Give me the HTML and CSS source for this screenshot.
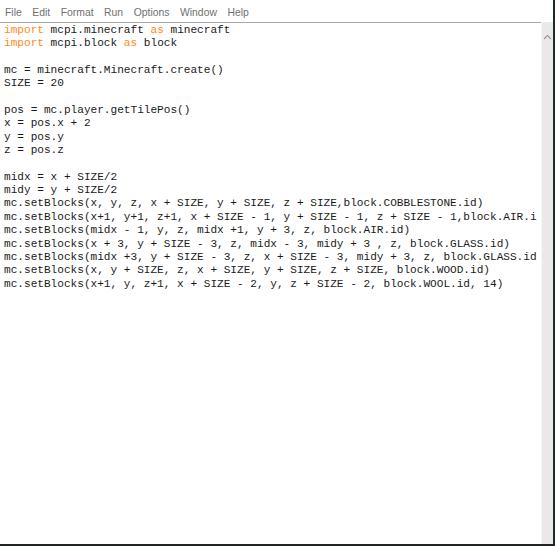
FILE: index.html
```html
<!DOCTYPE html>
<html lang="en">

<head>
    <meta charset="UTF-8">
    <meta name="viewport" content="width=device-width, initial-scale=1.0">
    <title>IDLE editor</title>
    <link rel="stylesheet" href="styles.css">
</head>

<body>
    <div class="window">
        <div class="menu-bar">
            <span class="menu-item">File</span>
            <span class="menu-item">Edit</span>
            <span class="menu-item">Format</span>
            <span class="menu-item">Run</span>
            <span class="menu-item">Options</span>
            <span class="menu-item">Window</span>
            <span class="menu-item">Help</span>
        </div>
        <div class="main">
            <div class="editor">
                <div class="line"><span class="kw">import</span> mcpi.minecraft <span class="kw">as</span> minecraft</div>
                <div class="line"><span class="kw">import</span> mcpi.block <span class="kw">as</span> block</div>
                <div class="line"></div>
                <div class="line">mc = minecraft.Minecraft.create()</div>
                <div class="line">SIZE = 20</div>
                <div class="line"></div>
                <div class="line">pos = mc.player.getTilePos()</div>
                <div class="line">x = pos.x + 2</div>
                <div class="line">y = pos.y</div>
                <div class="line">z = pos.z</div>
                <div class="line"></div>
                <div class="line">midx = x + SIZE/2</div>
                <div class="line">midy = y + SIZE/2</div>
                <div class="line">mc.setBlocks(x, y, z, x + SIZE, y + SIZE, z + SIZE,block.COBBLESTONE.id)</div>
                <div class="line">mc.setBlocks(x+1, y+1, z+1, x + SIZE - 1, y + SIZE - 1, z + SIZE - 1,block.AIR.i</div>
                <div class="line">mc.setBlocks(midx - 1, y, z, midx +1, y + 3, z, block.AIR.id)</div>
                <div class="line">mc.setBlocks(x + 3, y + SIZE - 3, z, midx - 3, midy + 3 , z, block.GLASS.id)</div>
                <div class="line">mc.setBlocks(midx +3, y + SIZE - 3, z, x + SIZE - 3, midy + 3, z, block.GLASS.id</div>
                <div class="line">mc.setBlocks(x, y + SIZE, z, x + SIZE, y + SIZE, z + SIZE, block.WOOD.id)</div>
                <div class="line">mc.setBlocks(x+1, y, z+1, x + SIZE - 2, y, z + SIZE - 2, block.WOOL.id, 14)</div>
            </div>
            <div class="scrollbar">
                <svg class="arrow" width="9" height="6" viewBox="0 0 9 6">
                    <path d="M1 5 L4.5 1.5 L8 5" fill="none" stroke="#9a9a9a" stroke-width="1.2" />
                </svg>
            </div>
        </div>
    </div>
</body>

</html>
```

FILE: styles.css
```css
* {
    box-sizing: border-box;
}

body {
    margin: 0;
    background-color: #ffffff;
}

.window {
    width: 555px;
    height: 546px;
    display: flex;
    flex-direction: column;
    border-right: 2px solid #1e2626;
    border-bottom: 2px solid #1e2626;
    background-color: #ffffff;
    overflow: hidden;
}

.menu-bar {
    height: 22px;
    display: flex;
    align-items: center;
    padding: 2px 0 0 5px;
    gap: 10.5px;
    font-family: "Liberation Sans", sans-serif;
    font-size: 10.4px;
    color: #707070;
}

.main {
    flex: 1;
    display: flex;
    min-height: 0;
}

.editor {
    flex: 1;
    min-width: 0;
    padding: 1px 0 0 4px;
    border-top: 1px solid #a8a8a8;
    font-family: "Liberation Mono", monospace;
    font-size: 11.1px;
    color: #1a1a1a;
    overflow: hidden;
}

.line {
    height: 13.35px;
    line-height: 13.35px;
    white-space: pre;
}

.kw {
    color: #ff8a1c;
}

.scrollbar {
    width: 12px;
    background-color: #e9e9e9;
    border-left: 1px solid #f6f6f6;
    display: flex;
    justify-content: center;
    padding-top: 12px;
}

.arrow {
    display: block;
}
```
